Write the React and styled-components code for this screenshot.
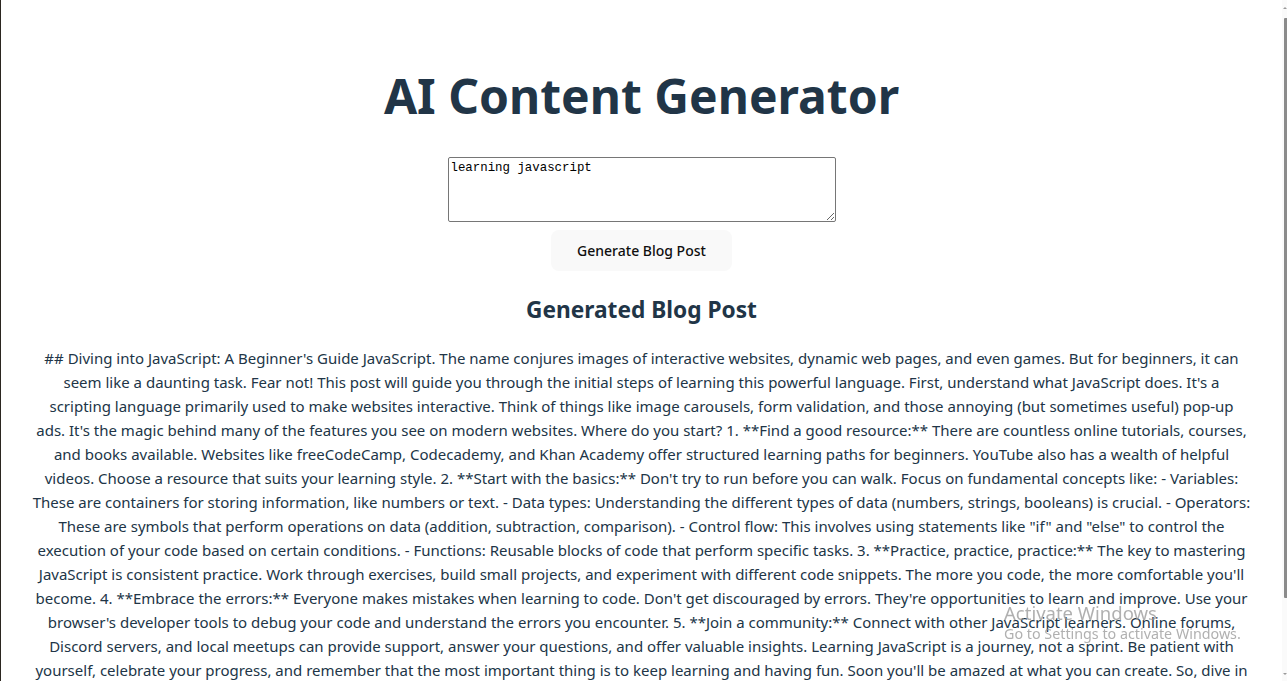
import React, { useState } from 'react'
import styled, { createGlobalStyle } from 'styled-components'

const GlobalStyle = createGlobalStyle`
  html, body {
    margin: 0;
    height: 100%;
    overflow: hidden;
    background: #ffffff;
  }
  body {
    font-family: "Noto Sans", "Open Sans", sans-serif;
    color: #213547;
    -webkit-font-smoothing: antialiased;
  }
`

const Shell = styled.div`
  display: flex;
  height: 100vh;
  border-left: 1px solid #2b2620;
`

const Page = styled.main`
  flex: 1;
  min-width: 0;
  overflow: hidden;
`

const Root = styled.div`
  max-width: 1280px;
  margin: 0 auto;
  padding: 32px 32px 0;
  box-sizing: border-box;
  text-align: center;
`

const Title = styled.h1`
  font-size: 48px;
  line-height: 1.1;
  font-weight: 700;
  margin: 38px 0 34px;
  color: #213547;
`

const Form = styled.div`
  display: flex;
  flex-direction: column;
  align-items: center;
  gap: 8px;
`

const Prompt = styled.textarea`
  width: 388px;
  height: 65px;
  box-sizing: border-box;
  padding: 3px 2px;
  border: 1px solid #767676;
  border-radius: 2px;
  font-family: "Liberation Mono", "DejaVu Sans Mono", monospace;
  font-size: 12.4px;
  line-height: 15px;
  color: #000;
  resize: vertical;
  outline: none;
`

const Button = styled.button`
  height: 41px;
  padding: 0 25px;
  border: 1px solid transparent;
  border-radius: 8px;
  background: #f9f9f9;
  color: #0f0f0f;
  font-family: inherit;
  font-size: 14px;
  font-weight: 500;
  cursor: pointer;
`

const Subtitle = styled.h2`
  font-size: 22.7px;
  line-height: 34px;
  font-weight: 700;
  margin: 22px 0 0;
  color: #213547;
`

const Post = styled.p`
  margin: 19px -10px 0;
  font-size: 15px;
  line-height: 24px;
  white-space: nowrap;
`

const ScrollBar = styled.div`
  width: 5px;
  flex: 0 0 5px;
  background: #fafafa;
  display: flex;
  flex-direction: column;
  align-items: flex-end;
`

const Arrow = styled.span`
  width: 0;
  height: 0;
  margin: ${p => (p.$down ? '5px 0 6px' : '7px 0 6px')};
  border-left: 2px solid transparent;
  border-right: 2px solid transparent;
  ${p => (p.$down ? 'border-top: 2px solid #9a9a9a;' : 'border-bottom: 2px solid #9a9a9a;')}
`

const Thumb = styled.div`
  width: 3px;
  height: 580px;
  margin-top: 3px;
  background: #8b8b8b;
  border-radius: 1px 0 0 1px;
`

const Track = styled.div`
  flex: 1;
`

const Watermark = styled.div`
  position: fixed;
  left: 1004px;
  top: 601px;
  color: rgba(150, 150, 150, 0.75);
  font-family: "Noto Sans", "Open Sans", sans-serif;
  text-align: left;
  pointer-events: none;
`

const WatermarkTitle = styled.div`
  font-size: 18.5px;
  line-height: 24px;
`

const WatermarkNote = styled.div`
  font-size: 14.3px;
  line-height: 18px;
`

const lines = [
  "## Diving into JavaScript: A Beginner's Guide JavaScript. The name conjures images of interactive websites, dynamic web pages, and even games. But for beginners, it can",
  "seem like a daunting task. Fear not! This post will guide you through the initial steps of learning this powerful language. First, understand what JavaScript does. It's a",
  "scripting language primarily used to make websites interactive. Think of things like image carousels, form validation, and those annoying (but sometimes useful) pop-up",
  "ads. It's the magic behind many of the features you see on modern websites. Where do you start? 1. **Find a good resource:** There are countless online tutorials, courses,",
  "and books available. Websites like freeCodeCamp, Codecademy, and Khan Academy offer structured learning paths for beginners. YouTube also has a wealth of helpful",
  "videos. Choose a resource that suits your learning style. 2. **Start with the basics:** Don't try to run before you can walk. Focus on fundamental concepts like: - Variables:",
  "These are containers for storing information, like numbers or text. - Data types: Understanding the different types of data (numbers, strings, booleans) is crucial. - Operators:",
  "These are symbols that perform operations on data (addition, subtraction, comparison). - Control flow: This involves using statements like \"if\" and \"else\" to control the",
  "execution of your code based on certain conditions. - Functions: Reusable blocks of code that perform specific tasks. 3. **Practice, practice, practice:** The key to mastering",
  "JavaScript is consistent practice. Work through exercises, build small projects, and experiment with different code snippets. The more you code, the more comfortable you'll",
  "become. 4. **Embrace the errors:** Everyone makes mistakes when learning to code. Don't get discouraged by errors. They're opportunities to learn and improve. Use your",
  "browser's developer tools to debug your code and understand the errors you encounter. 5. **Join a community:** Connect with other JavaScript learners. Online forums,",
  "Discord servers, and local meetups can provide support, answer your questions, and offer valuable insights. Learning JavaScript is a journey, not a sprint. Be patient with",
  "yourself, celebrate your progress, and remember that the most important thing is to keep learning and having fun. Soon you'll be amazed at what you can create. So, dive in",
  "and start coding! Happy learning!",
]

export default function App() {
  const [topic, setTopic] = useState('learning javascript')

  return (
    <>
      <GlobalStyle />
      <Shell>
        <Page>
          <Root>
            <Title>AI Content Generator</Title>
            <Form>
              <Prompt value={topic} onChange={e => setTopic(e.target.value)} spellCheck />
              <Button>Generate Blog Post</Button>
            </Form>
            <Subtitle>Generated Blog Post</Subtitle>
            <Post>
              {lines.map((line, i) => (
                <React.Fragment key={i}>
                  {line}
                  {i < lines.length - 1 && <br />}
                </React.Fragment>
              ))}
            </Post>
          </Root>
        </Page>
        <ScrollBar>
          <Arrow />
          <Thumb />
          <Track />
          <Arrow $down />
        </ScrollBar>
      </Shell>
      <Watermark>
        <WatermarkTitle>Activate Windows</WatermarkTitle>
        <WatermarkNote>Go to Settings to activate Windows.</WatermarkNote>
      </Watermark>
    </>
  )
}
